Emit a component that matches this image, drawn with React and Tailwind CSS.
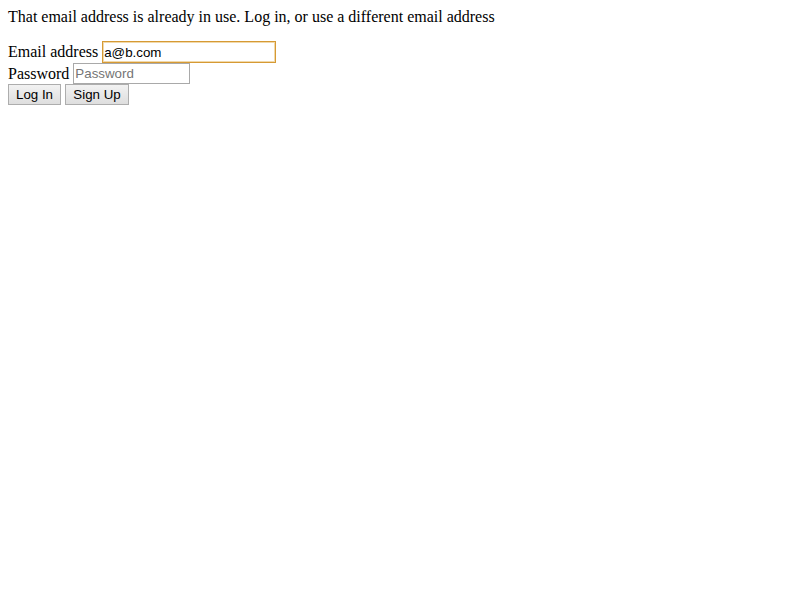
export default function App() {
  return (
    <div className="p-2 font-['Liberation_Serif',serif] text-[16px] leading-[18px] text-black">
      <p>That email address is already in use. Log in, or use a different email address</p>
      <form className="mt-[15px]" onSubmit={(e) => e.preventDefault()}>
        <div className="flex items-center h-[22px]">
          <label htmlFor="email">Email address</label>
          <input
            id="email"
            type="email"
            defaultValue="a@b.com"
            className="ml-[4px] h-[22px] w-[174px] border border-[#d69a34] px-px font-['Liberation_Sans',sans-serif] text-[13.33px] text-black shadow-[inset_0_0_0_1px_#f1d9ab] outline-none"
          />
        </div>
        <div className="flex items-center h-[21px]">
          <label htmlFor="password">Password</label>
          <input
            id="password"
            type="password"
            placeholder="Password"
            className="ml-[4px] h-[21px] w-[117px] border border-[#a9a9a9] px-px font-['Liberation_Sans',sans-serif] text-[13.33px] text-black placeholder:text-[#757575] outline-none"
          />
        </div>
        <div className="flex items-center h-[21px] gap-[4px]">
          <button
            type="submit"
            className="h-[21px] w-[53px] border border-[#adadad] bg-gradient-to-b from-[#f2f2f2] to-[#dedede] font-['Liberation_Sans',sans-serif] text-[13.33px] leading-none text-black"
          >
            Log In
          </button>
          <button
            type="button"
            className="h-[21px] w-[64px] border border-[#adadad] bg-gradient-to-b from-[#f2f2f2] to-[#dedede] font-['Liberation_Sans',sans-serif] text-[13.33px] leading-none text-black"
          >
            Sign Up
          </button>
        </div>
      </form>
    </div>
  );
}
